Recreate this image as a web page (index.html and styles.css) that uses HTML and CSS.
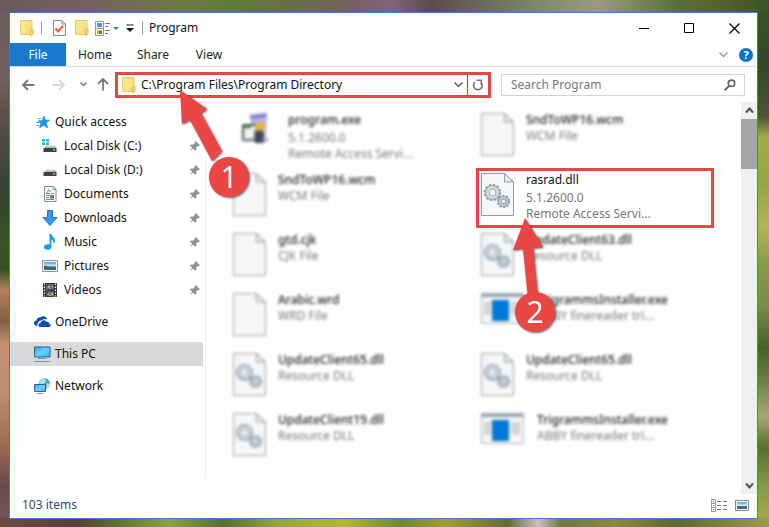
FILE: index.html
```
<!DOCTYPE html>
<html lang="en">
<head>
<meta charset="utf-8">
<title>Program</title>
<link rel="stylesheet" href="styles.css">
</head>
<body>
<svg class="defs" width="0" height="0" aria-hidden="true">
  <defs>
    <linearGradient id="g-folder" x1="0" y1="0" x2="1" y2="1"><stop offset="0" stop-color="#ffe9a2"/><stop offset="1" stop-color="#f9d873"/></linearGradient>
    <linearGradient id="g-screen" x1="0" y1="0" x2="1" y2="1"><stop offset="0" stop-color="#2ea5f2"/><stop offset=".5" stop-color="#6fd0ff"/><stop offset="1" stop-color="#2fb0fb"/></linearGradient>
    <linearGradient id="g-disk" x1="0" y1="0" x2="0" y2="1"><stop offset="0" stop-color="#d6d6d6"/><stop offset="1" stop-color="#a8a8a8"/></linearGradient>
    <linearGradient id="g-pic" x1="0" y1="0" x2="0" y2="1"><stop offset="0" stop-color="#4b9be8"/><stop offset=".5" stop-color="#d5edfa"/><stop offset=".6" stop-color="#3d7d7d"/><stop offset="1" stop-color="#2c5f8c"/></linearGradient>
  </defs>
  <symbol id="folder" viewBox="0 0 14 16"><path d="M.5.5h11.500v14H.5z" fill="url(#g-folder)" stroke="#ecc95f"/><path d="M10.500 15.500V11l1-1.500h1.500V14l-1 1.500z" fill="#fbe08a" stroke="#e2b53c"/></symbol>
  <symbol id="pin" viewBox="0 0 11 11"><path d="M6.500 0 11 4.200 9.700 5 8.900 4.800 7 6.800 7.200 8.800 6.300 9.700 3.900 7.400.3 10.700 3.200 6.800.9 4.500 1.800 3.600 3.900 3.800 6 1.900 5.700 1z" fill="#84919c"/></symbol>
  <symbol id="doc" viewBox="0 0 33 43"><path d="M.5.5h23l9 8.500v33.500H.5z" fill="#f5f7f9" stroke="#969b9e"/><path d="M23.500.5V9h9z" fill="#e4e9eb" stroke="#969b9e"/></symbol>
  <symbol id="gears" viewBox="0 0 33 43">
    <circle cx="11.500" cy="19.500" r="7.600" fill="none" stroke="#8797a3" stroke-width="2" stroke-dasharray="2.400 1.580"/>
    <circle cx="11.500" cy="19.500" r="5.200" fill="none" stroke="#8d9da8" stroke-width="4.600"/>
    <circle cx="11.500" cy="19.500" r="5.200" fill="none" stroke="#ccd7de" stroke-width="3.200"/>
    <circle cx="22.500" cy="28.500" r="5.700" fill="none" stroke="#8797a3" stroke-width="1.800" stroke-dasharray="2 1.580"/>
    <circle cx="22.500" cy="28.500" r="3.700" fill="none" stroke="#8797a3" stroke-width="3.800"/>
    <circle cx="22.500" cy="28.500" r="3.700" fill="none" stroke="#becad2" stroke-width="2.400"/>
  </symbol>
  <symbol id="app" viewBox="0 0 44 32"><path d="M.5.5h42v30H.5z" fill="#f4f6f7" stroke="#a9afb4"/><path d="M0 0h43v4H0z" fill="#9da6ad"/><path d="M3 9h7v13H3zM30 9h9v13h-9z" fill="#d3d5d7"/><path d="M11 7h17v21H11z" fill="#0078d7"/></symbol>
</svg>

<main class="window">
  <header class="titlebar">
    <svg class="ic" width="14" height="16"><use href="#folder"/></svg>
    <span class="sep"></span>
    <button class="plain props" aria-label="Properties"><svg width="13" height="16" viewBox="0 0 13 16"><path d="M.5.5h8.500l3.500 3.500v11.500H.5z" fill="#fafafa" stroke="#8b8b8b"/><path d="M9 .5V4h3.500" fill="none" stroke="#8b8b8b"/><path d="m2.500 8.500 2.500 3L10 6" fill="none" stroke="#f0622d" stroke-width="2"/></svg></button>
    <button class="plain newf" aria-label="New folder"><svg width="14" height="16"><use href="#folder"/></svg></button>
    <button class="plain lay" aria-label="Layout"><svg width="24" height="15" viewBox="0 0 24 15"><path d="M.5.5h8v14h-8zM0 7.500h9" fill="#fff" stroke="#999"/><path d="M2 2h5v4H2z" fill="#4a97d5"/><path d="M2 9h5v4H2z" fill="#e3b33c"/><path d="M4 10h3v3H4z" fill="#3d8b46"/><path d="M10 2.500h5M10 5.500h3M10 9.500h5M10 12.500h3" stroke="#777"/><path d="M18 6h6l-3 3z" fill="#3c78bd"/></svg></button>
    <button class="plain more" aria-label="Customize toolbar"><svg width="8" height="8" viewBox="0 0 8 8"><path d="M.5 1h7" stroke="#111" /><path d="M0 4h8L4 8z" fill="#111"/></svg></button>
    <span class="sep"></span>
    <h1>Program</h1>
    <div class="winbtns">
      <button class="plain" aria-label="Minimize"><svg width="11" height="11"><path d="M0 5.500h10" stroke="#000"/></svg></button>
      <button class="plain" aria-label="Maximize"><svg width="11" height="11"><path d="M.5.5h9v9h-9z" fill="none" stroke="#000"/></svg></button>
      <button class="plain" aria-label="Close"><svg width="11" height="11"><path d="m.5.5 10 10m0-10-10 10" stroke="#000" stroke-width="1.200"/></svg></button>
    </div>
  </header>

  <nav class="tabs" aria-label="Ribbon">
    <button class="tab active">File</button>
    <button class="tab">Home</button>
    <button class="tab">Share</button>
    <button class="tab">View</button>
    <span class="grow"></span>
    <button class="plain exp" aria-label="Expand ribbon"><svg width="9" height="6"><path d="m.5.5 4 4 4-4" fill="none" stroke="#999" stroke-width="1.300"/></svg></button>
    <button class="help" aria-label="Help">?</button>
  </nav>

  <div class="addr">
    <button class="plain back" aria-label="Back"><svg width="13" height="12" viewBox="0 0 13 12"><path d="M12.500 6H1.500M6 1 1 6l5 5" fill="none" stroke="#777" stroke-width="1.800"/></svg></button>
    <button class="plain fwd" aria-label="Forward"><svg width="13" height="12" viewBox="0 0 13 12"><path d="M0 6h11.500M7 1l5 5-5 5" fill="none" stroke="#d6d6d6" stroke-width="1.800"/></svg></button>
    <button class="plain rec" aria-label="Recent"><svg width="7" height="5"><path d="m.5.5 3 3 3-3" fill="none" stroke="#777" stroke-width="1.500"/></svg></button>
    <button class="plain up" aria-label="Up"><svg width="12" height="13" viewBox="0 0 12 13"><path d="M6 12.500v-11M1 6l5-5 5 5" fill="none" stroke="#777" stroke-width="1.800"/></svg></button>
    <div class="pathbox">
      <svg class="ic" width="14" height="16"><use href="#folder"/></svg>
      <input class="path" aria-label="Address" value="C:\Program Files\Program Directory">
      <button class="plain drop" aria-label="Previous locations"><svg width="9" height="6"><path d="m.5.5 4 4 4-4" fill="none" stroke="#444" stroke-width="1.100"/></svg></button>
      <button class="plain refresh" aria-label="Refresh"><svg width="12" height="12" viewBox="0 0 12 12"><path d="M9 3.500A4.300 4.300 0 1 1 3 3.200" fill="none" stroke="#777" stroke-width="1.700"/><path d="M4.500 1.200h4.800v4.600" fill="none" stroke="#777" stroke-width="1.500"/></svg></button>
    </div>
    <div class="search">
      <input aria-label="Search Program" placeholder="Search Program">
      <svg width="12" height="12" viewBox="0 0 12 12"><circle cx="7.500" cy="4.300" r="3.200" fill="none" stroke="#666" stroke-width="1.700"/><path d="M5.300 6.600.7 11.200" stroke="#666" stroke-width="2"/></svg>
    </div>
  </div>

  <div class="content">
    <nav class="side" aria-label="Folders">
      <a href="#" class="row top"><svg width="14" height="14" viewBox="0 0 14 14"><path d="m8 1 1.300 4 4.400.200-3.500 2.600L11.700 13 7.500 10.200 3.500 13l1.400-4.600L2 6l4.200-.5z" fill="#2196e8" stroke="#157ccc" stroke-width=".6"/><path d="M2 3.500h3M0 7.500h3M0 10.500h3.500" stroke="#4aaef0"/></svg><span>Quick access</span></a>
      <a href="#" class="row"><svg width="16" height="16" viewBox="0 0 16 16"><path d="M0 1h3v2.500H0zM4 1h3v2.500H4zM0 4.500h3V7H0zM4 4.500h3V7H4z" fill="#22b1ee"/><path d="M4 7.500h9l2 3H2z" fill="url(#g-disk)"/><path d="M1.500 10h13v4h-13z" fill="#3f4245"/><path d="M11 11h2v1.500h-2z" fill="#57ea58"/></svg><span>Local Disk (C:)</span><svg class="pin" width="11" height="11"><use href="#pin"/></svg></a>
      <a href="#" class="row"><svg width="16" height="16" viewBox="0 0 16 16"><path d="M4 7.500h9l2 3H2z" fill="url(#g-disk)"/><path d="M1.500 10h13v4h-13z" fill="#3f4245"/><path d="M11 11h2v1.500h-2z" fill="#57ea58"/></svg><span>Local Disk (D:)</span><svg class="pin" width="11" height="11"><use href="#pin"/></svg></a>
      <a href="#" class="row"><svg width="16" height="16" viewBox="0 0 16 16"><path d="M2.500.5h9L14 3v12.500H2.500z" fill="#fff" stroke="#858b90"/><path d="M11 .5v3h3" fill="none" stroke="#858b90"/><path d="M5 7.500 6.500 3.500l1 2 2-1M4 7.500h4M9 7.500h3M4 9.500h8M4 11.500h3M4 13.500h8" fill="none" stroke="#339be0"/><path d="M8 10h4v2.500H8z" fill="#477d9c"/></svg><span>Documents</span><svg class="pin" width="11" height="11"><use href="#pin"/></svg></a>
      <a href="#" class="row"><svg width="16" height="16" viewBox="0 0 16 16"><path d="M5.500.5h5v7H15L8 15.500 1 7.500h4.500z" fill="#3a97e4" stroke="#2179c7"/></svg><span>Downloads</span><svg class="pin" width="11" height="11"><use href="#pin"/></svg></a>
      <a href="#" class="row"><svg width="16" height="16" viewBox="0 0 16 16"><ellipse cx="5.700" cy="13" rx="3.700" ry="2.700" fill="#0c9ff2"/><path d="M7.500 0h1.800c.4 2.600 4.200 3.300 3.700 7.500-.1 1.200-.7 2-1.400 2.700.4-2.400-.3-3.700-2.200-4.700V13H7.500z" fill="#0c9ff2"/></svg><span>Music</span><svg class="pin" width="11" height="11"><use href="#pin"/></svg></a>
      <a href="#" class="row"><svg width="16" height="16" viewBox="0 0 16 16"><path d="M.5 2.500h15v11H.5z" fill="#fff" stroke="#8b949b"/><path d="M2 4h12v8H2z" fill="url(#g-pic)"/><path d="M2 7.500c3 .2 5 1.800 12 2V12H2z" fill="#316d72"/></svg><span>Pictures</span><svg class="pin" width="11" height="11"><use href="#pin"/></svg></a>
      <a href="#" class="row"><svg width="16" height="16" viewBox="0 0 16 16"><path d="M1 1h14v14H1z" fill="#333"/><path d="M4 1.500h8v6H4zM4 8.500h8v6H4z" fill="#34559b"/><path d="M5 5.500 7 3l2 1 2-1v3l-3 1zM5 13l2-3 2 1 2-1v3l-3 1z" fill="#e5a92e"/><path d="M8 4h2v2H8zM7 11h2v2H7z" fill="#c93b2c"/><path d="M4 6h2v1.500H4zM10 13h2v1.500h-2z" fill="#449a50"/><path d="M2.500 1.500v13M13.500 1.500v13" stroke="#fff" stroke-width="1.200" stroke-dasharray="1.500 1.500"/></svg><span>Videos</span><svg class="pin" width="11" height="11"><use href="#pin"/></svg></a>
      <a href="#" class="row top root"><svg width="17" height="14" viewBox="0 0 17 14"><path d="M3.600 11C1.500 11 0 9.800 0 8.200 0 6.600 1.200 5.700 2.500 5.500 2.700 3.500 4.500 2 6.500 2.200 8.200.6 11.600.8 12.700 3.300c.5 1 .4 1.300.4 1.300C11 3.500 9 4 8 5.500 6 5 4 6.500 4.100 8.300 3 8.800 3 10 3.600 11z" fill="#0b4cb1"/><path d="M6.800 12C3.500 12 3.600 8.200 6.300 8c.2-3 4.700-4 6.200-1.200 1.800-.2 2.800.8 2.700 2.200 2.200.3 2 3-.2 3z" fill="#0b4cb1" /><path d="M6.300 7.200c-1.600.2-2.500 1.200-2.200 2.800M8.600 5.300C7 5.800 6.500 6.500 6.300 7.500" fill="none" stroke="#fff" stroke-width=".8"/></svg><span>OneDrive</span></a>
      <a href="#" class="row top root current"><svg width="17" height="16" viewBox="0 0 17 16"><path d="M.5 1h15.500v10H.5z" fill="url(#g-screen)" stroke="#31658e"/><path d="M4 12.500h8" stroke="#7e98ac"/><path d="M0 15.500h16" stroke="#7a97af"/></svg><span>This PC</span></a>
      <a href="#" class="row top root"><svg width="17" height="16" viewBox="0 0 17 16"><circle cx="10.500" cy="5.700" r="5.500" fill="#4e9fc8"/><path d="M7 2c2-2 4-1.500 5 0l-1 3-3 1-3 0zM13 5l3 1-1 3-3 2z" fill="#b6e0ea"/><path d="M.5 6.500h11v7H.5z" fill="url(#g-screen)" stroke="#31658e"/><path d="M3 15.500h6" stroke="#7e98ac"/></svg><span>Network</span></a>
    </nav>

    <section class="files" aria-label="Files">
      <article class="file soft shift"><svg width="34" height="34" viewBox="0 0 34 34"><path d="m12 2 17-2-1 24-13 2z" fill="#b7b4e5"/><path d="m12 2 17-2v4l-17 2z" fill="#8583c6"/><path d="M5 12h13v15H5z" fill="#eef1ec" stroke="#555" stroke-width="2"/><path d="M4 12h9v3H4z" fill="#427d53"/><circle cx="22" cy="14" r="5" fill="#e8b23f"/><path d="m16 20 7-3 3 4v9h-9z" fill="#3e4557"/><path d="m2 28 6-2 2 3zM22 27l9-2-2 4z" fill="#8993bf"/></svg><div class="info three"><h2>program.exe</h2><p>5.1.2600.0</p><p>Remote Access Servi...</p></div></article>
      <article class="file soft"><svg width="33" height="43"><use href="#doc"/></svg><div class="info"><h2>SndToWP16.wcm</h2><p>WCM File</p></div></article>
      <article class="file soft"><svg width="33" height="43"><use href="#doc"/></svg><div class="info"><h2>SndToWP16.wcm</h2><p>WCM File</p></div></article>
      <article class="file marked"><svg width="33" height="43"><use href="#doc"/><use href="#gears"/></svg><div class="info three"><h2>rasrad.dll</h2><p>5.1.2600.0</p><p>Remote Access Servi...</p></div></article>
      <article class="file soft"><svg width="33" height="43"><use href="#doc"/></svg><div class="info"><h2>gtd.cjk</h2><p>CJK File</p></div></article>
      <article class="file soft"><svg width="33" height="43"><use href="#doc"/><use href="#gears"/></svg><div class="info"><h2>UpdateClient63.dll</h2><p>Resource DLL</p></div></article>
      <article class="file soft"><svg width="33" height="43"><use href="#doc"/></svg><div class="info"><h2>Arabic.wrd</h2><p>WRD File</p></div></article>
      <article class="file soft"><svg width="44" height="32"><use href="#app"/></svg><div class="info"><h2>TrigrammsInstaller.exe</h2><p>ABBY finereader tri...</p></div></article>
      <article class="file soft"><svg width="33" height="43"><use href="#doc"/><use href="#gears"/></svg><div class="info"><h2>UpdateClient65.dll</h2><p>Resource DLL</p></div></article>
      <article class="file soft"><svg width="33" height="43"><use href="#doc"/><use href="#gears"/></svg><div class="info"><h2>UpdateClient65.dll</h2><p>Resource DLL</p></div></article>
      <article class="file soft"><svg width="33" height="43"><use href="#doc"/><use href="#gears"/></svg><div class="info"><h2>UpdateClient19.dll</h2><p>Resource DLL</p></div></article>
      <article class="file soft"><svg width="44" height="32"><use href="#app"/></svg><div class="info"><h2>TrigrammsInstaller.exe</h2><p>ABBY finereader tri...</p></div></article>
    </section>

    <div class="scroll">
      <button class="plain" aria-label="Scroll up"><svg width="9" height="7"><path d="m1 5.500 3.500-4 3.500 4" fill="none" stroke="#505050" stroke-width="2"/></svg></button>
      <div class="thumb"></div>
      <span class="grow"></span>
      <button class="plain" aria-label="Scroll down"><svg width="9" height="7"><path d="m1 1.500 3.500 4 3.500-4" fill="none" stroke="#505050" stroke-width="2"/></svg></button>
    </div>
  </div>

  <footer class="status">
    <span>103 items</span>
    <span class="grow"></span>
    <button class="plain" aria-label="Details view"><svg width="17" height="13" viewBox="0 0 17 13"><path d="M.5.5h4v12h-4zM0 4.500h5M0 8.500h5" fill="none" stroke="#999"/><path d="M2 2.500h1M2 6.500h1M2 10.500h1" stroke="#a33"/><path d="M6 2.500h4M12 2.500h4M6 6.500h4M12 6.500h4M6 10.500h4M12 10.500h4" stroke="#777"/></svg></button>
    <button class="plain" aria-label="Icon view"><svg width="14" height="11" viewBox="0 0 14 11"><path d="M.5.5h13v10H.5z" fill="#fff" stroke="#888"/><path d="M2 2h10v7H2z" fill="url(#g-pic)"/></svg></button>
  </footer>

  <svg class="callout one" width="76" height="116" viewBox="0 0 76 116"><g fill="#ea4744"><path d="m3 3 27 19-6 4 21 38-10 10-22-41-8 4z"/><circle cx="52" cy="90" r="20"/></g><text x="52" y="101" text-anchor="middle">1</text></svg>
  <svg class="callout two" width="48" height="122" viewBox="0 0 48 122"><g fill="#ea4744"><path d="m15 3 18 29-10 1 5 49-10 2-5-50-10 1z"/><circle cx="25" cy="97" r="20"/></g><text x="25" y="108" text-anchor="middle">2</text></svg>
</main>
</body>
</html>
```
FILE: styles.css
```
* { box-sizing: border-box; }

body {
  margin: 0;
  min-height: 100vh;
  padding: 12px 11px 8px 9px;
  display: flex;
  font: 12px/16px "Noto Sans", "Open Sans", sans-serif;
  color: #111;
  background:
    linear-gradient(90deg, #6b5a5b 0, #75615f 12%, #6b7a45 24%, #5c7a38 31%, #75605f 46%, #84627a 51%, #5c4b4e 56%, #7d8a6c 70%, #9a9a80 78%, #57703b 88%, #55602f 94%, #3c5426) 0 0 / 100% 13px no-repeat,
    linear-gradient(90deg, #6d4a48 0, #553f3a 10%, #59712f 15%, #8ba53f 22%, #4f7031 29%, #93a83b 36%, #b1b92e 45%, #6b8a35 52%, #a0a030 58%, #5f6e33 66%, #cbbfc0 70%, #687a44 73%, #8a8a40 80%, #586a2e 88%, #9c9c4c) 0 100% / 100% 10px no-repeat,
    linear-gradient(#6d5c5e 0, #716060 15%, #564c45 24%, #40423a 33%, #35472b 40%, #375528 46%, #355020 51%, #b77e63 55%, #7f5c45 61%, #c09076 65%, #bd8d76 74%, #a06d55 84%, #6a4a4c 92%, #7b5559) 0 0 / 10px 100% no-repeat,
    linear-gradient(#3c5426 0, #35472a 12%, #4d5138 22%, #a3ab48 26%, #98a344 35%, #b5b35c 43%, #8c994a 50%, #7c8b49 58%, #45602f 66%, #6c7c4c 72%, #aca476 79%, #56702f 85%, #87984a 92%, #b3a94c) 100% 0 / 12px 100% no-repeat;
}

.defs { position: absolute; }
h1, h2, p { margin: 0; font-size: 12px; font-weight: 400; }
svg { display: block; flex: none; }
button, input { font: inherit; color: inherit; }
.plain { display: flex; align-items: center; justify-content: center; padding: 0; border: 0; background: none; }
.grow { flex: 1; }

.window {
  position: relative;
  flex: 1;
  min-width: 0;
  display: flex;
  flex-direction: column;
  border: 1px solid #3f7fca;
  background: #fff;
}

.titlebar { display: flex; align-items: center; height: 30px; padding-left: 10px; }
.sep { width: 1px; height: 12px; background: #999; }
.titlebar .ic { margin-right: 7px; }
.props { margin: 0 9px 0 11px; }
.newf { margin-right: 6px; }
.lay { margin-right: 7px; }
.more { margin-right: 8px; }
.titlebar h1 { margin-left: 6px; font-size: 12px; }
.winbtns { display: flex; margin-left: auto; }
.winbtns .plain { width: 45px; height: 28px; }

.tabs { display: flex; height: 24px; border-bottom: 1px solid #dadbdc; }
.tab { min-width: 58px; padding: 0; border: 0; background: none; color: #222; }
.tab.active { min-width: 56px; background: #1979ca; color: #fff; }
.tab:nth-child(4) { min-width: 54px; }
.exp { margin-right: 11px; }
.help { align-self: center; width: 14px; height: 14px; margin-right: 4px; padding: 0; border: 0; border-radius: 7px; background: #0a73d0; color: #fff; font-size: 11px; font-weight: 700; line-height: 14px; }

.addr { display: flex; align-items: center; height: 35px; padding: 0 12px; }
.back { margin-right: 17px; }
.fwd { margin-right: 15px; }
.rec { margin-right: 10px; }
.up { margin-right: 6px; }
.pathbox { flex: 366; display: flex; align-items: center; height: 26px; padding-left: 4px; border: 3px solid #ea4744; }
.path { flex: 1; min-width: 0; padding: 0 5px; border: 0; outline: 0; background: none; }
.drop { width: 18px; }
.refresh { width: 21px; height: 20px; border-left: 1px solid #1979ca; }
.search { flex: 234; display: flex; align-items: center; height: 22px; margin-left: 10px; padding-right: 8px; border: 1px solid #d4d4d4; }
.search input { flex: 1; min-width: 0; padding: 0 9px; border: 0; outline: 0; background: none; }
.search input::placeholder { color: #777; opacity: 1; }

.content { flex: 1; display: flex; }
.side { width: 196px; margin-bottom: 15px; padding: 8px 2px 0 0; border-right: 1px solid #f0f0f0; }
.row { display: flex; align-items: center; gap: 6px; height: 24px; padding: 0 3px 0 32px; color: #111; text-decoration: none; }
.row.top { gap: 5px; padding-left: 26px; }
.row.root { gap: 4px; padding-left: 24px; margin-top: 8px; }
.row.current { background: #d9d9d9; }
.pin { margin-left: auto; }

.files { flex: 1; display: grid; grid-template-columns: repeat(2, minmax(0, 238px)); grid-auto-rows: 60px; column-gap: 10px; padding: 6px 0 0 22px; }
.file { display: flex; gap: 12px; padding: 2px; border: 3px solid transparent; white-space: nowrap; }
.soft { filter: blur(1.4px); }
.soft h2 { color: #222; font-weight: 500; }
.shift { padding-left: 7px; gap: 16px; }
.info { margin-top: -1px; }
.info p { color: #777; }
.three h2 { margin-bottom: 2px; }
.marked { border-color: #ea4744; }

.scroll { display: flex; flex-direction: column; align-items: center; width: 16px; background: #f0f0f0; }
.scroll .plain { height: 17px; }
.thumb { width: 16px; height: 50px; background: #a6a6a6; }

.status { display: flex; align-items: center; gap: 7px; height: 24px; padding: 0 8px 2px 12px; color: #35496a; }

.callout { position: absolute; overflow: visible; filter: drop-shadow(1px 1px 1px #0009); }
.callout text { font: 30px "Noto Sans", sans-serif; fill: #fff; }
.one { left: 167px; top: 74px; }
.two { left: 500px; top: 202px; }
```
